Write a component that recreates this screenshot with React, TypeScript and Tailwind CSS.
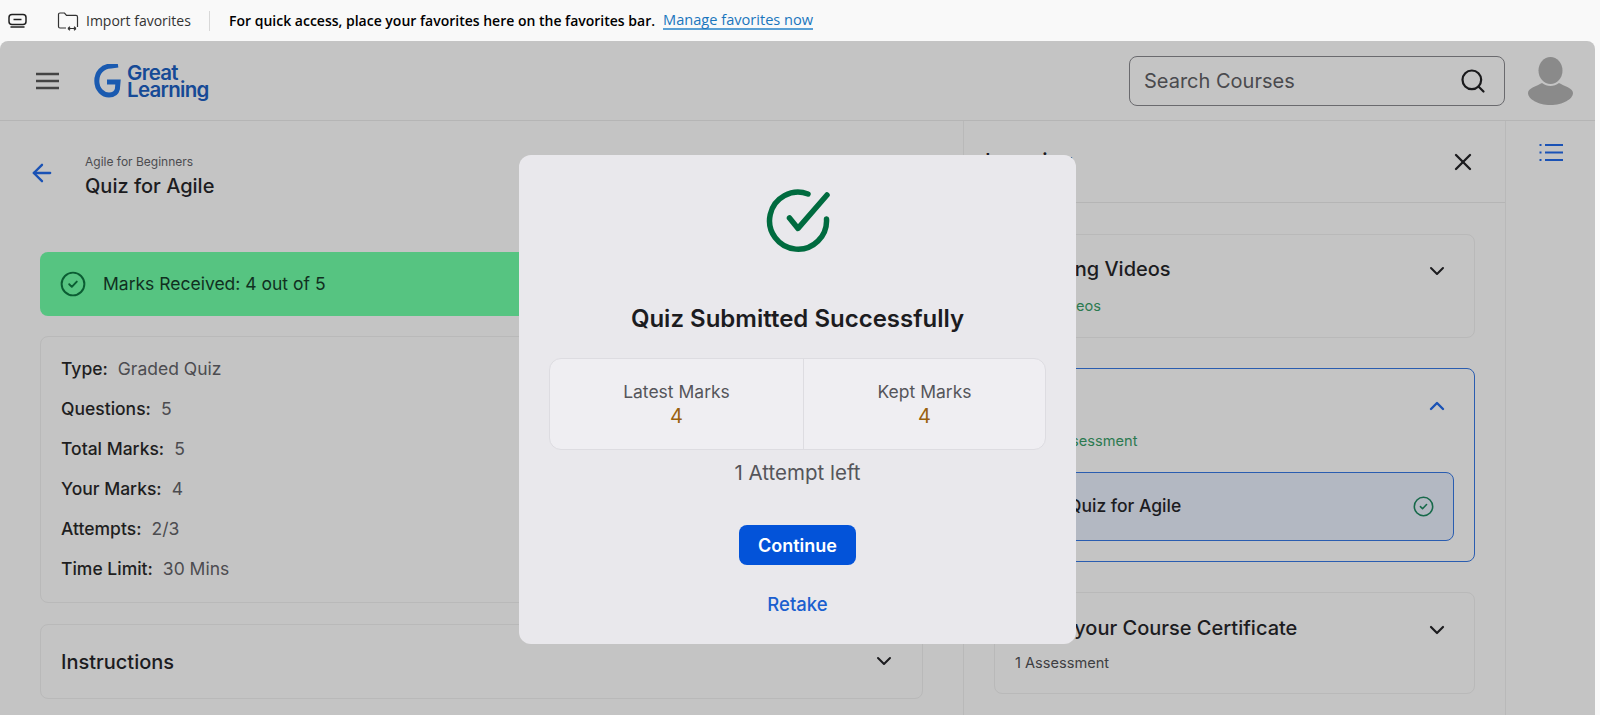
import React from "react";
import { ChevronDown, ChevronUp, Search, X, ArrowLeft } from "lucide-react";

function CheckCircle({ className }: { className?: string }) {
  return (
    <svg viewBox="0 0 24 24" fill="none" stroke="currentColor" className={className}>
      <circle cx="12" cy="12" r="10.5" strokeWidth="1.8" />
      <path d="M8.5 12.2l2.4 2.4 4.6-4.8" strokeWidth="1.8" strokeLinecap="round" strokeLinejoin="round" />
    </svg>
  );
}

function Row({ label, value }: { label: string; value: string }) {
  return (
    <div className="flex h-6 items-center text-[17.5px] leading-6">
      <span className="font-medium text-[#1e1e21]">{label}</span>
      <span className="ml-[10px] text-[#4c4c50]">{value}</span>
    </div>
  );
}

function Logo() {
  return (
    <div className="flex items-center">
      <svg width="27" height="34" viewBox="0 0 27 34" fill="none">
        <path d="M24 1 L17 2 C8 2.4 2.8 9 2.8 17 C2.8 25.5 9 31 15 31 C20 31 22.6 28.5 23.4 25 L24 18 L13 18" stroke="#1a5ab0" strokeWidth="5" strokeLinejoin="miter" />
      </svg>
      <div className="ml-[6px] flex flex-col text-[20.5px] font-semibold leading-[17px] tracking-[-0.7px] text-[#164a96]">
        <span>Great</span>
        <span>Learning</span>
      </div>
    </div>
  );
}

export default function App() {
  return (
    <div className="relative flex h-[715px] w-[1600px] flex-col overflow-hidden bg-[#f9f9f9] font-['Inter',sans-serif]">
      {/* Favorites bar */}
      <div className="flex h-[41px] items-center font-['Open_Sans',sans-serif] text-[14px] text-[#222]">
        <svg className="ml-[8px]" width="20" height="16" viewBox="0 0 20 16" fill="none" stroke="#222" strokeWidth="1.5">
          <rect x="1" y="1.5" width="17" height="10" rx="3" />
          <path d="M5.5 6.5h8" />
          <path d="M3 14h13" strokeLinecap="round" />
        </svg>
        <svg className="ml-[29px]" width="22" height="20" viewBox="0 0 22 20" fill="none" stroke="#333" strokeWidth="1.2">
          <path d="M9 17H3a1.5 1.5 0 0 1-1.5-1.5v-12A1.5 1.5 0 0 1 3 2h4.5l2 2.4H19a1.5 1.5 0 0 1 1.5 1.5V16" />
          <path d="M11 17.5h8M11 17.5l2-1.8M11 17.5l2 1.8M19 17.5l-2-1.8M19 17.5l-2 1.8" />
        </svg>
        <span className="ml-[7px] w-[104px] whitespace-nowrap text-[#333]">Import favorites</span>
        <div className="ml-[19px] h-[20px] w-px bg-[#d8d8d8]" />
        <span className="ml-[19px] whitespace-nowrap text-[14px] font-semibold text-black">For quick access, place your favorites here on the favorites bar.</span>
        <span className="ml-[8px] whitespace-nowrap border-b-2 border-[#5aa0d4] text-[14.6px] font-medium leading-[17px] text-[#1a76bd]">Manage favorites now</span>
      </div>

      {/* App */}
      <div className="mr-[5px] flex flex-1 flex-col rounded-t-lg bg-[#c4c4c4]">
        <header className="flex h-[80px] items-center border-b border-[#b5b5b5] pl-[36px]">
          <svg width="23" height="18" viewBox="0 0 23 18" stroke="#444" strokeWidth="2.4">
            <path d="M0 2h23M0 9h23M0 16h23" />
          </svg>
          <div className="ml-[35px]">
            <Logo />
          </div>
          <div className="ml-auto flex h-[50px] w-[376px] items-center justify-between rounded-lg border border-[#6a6a6e] pl-[14px] pr-[17px]">
            <span className="text-[20px] text-[#4a4a4e]">Search Courses</span>
            <Search size={28} strokeWidth={1.9} className="text-[#1a1a1c]" />
          </div>
          <svg className="ml-[23px] mr-[22px]" width="45" height="48" viewBox="0 0 45 48" fill="#8a8a8a">
            <ellipse cx="22.5" cy="13.5" rx="12" ry="13.5" />
            <path d="M14 26c-5 3-14 5-14 10 0 6 10 12 22.5 12S45 42 45 36c0-5-9-7-14-10-5 4-12 4-17 0z" />
          </svg>
        </header>

        <div className="flex flex-1 overflow-hidden">
          {/* Left */}
          <div className="w-[963px] shrink-0 pl-[40px] pr-[40px] pt-[33px]">
            <div className="relative">
              <ArrowLeft size={28} strokeWidth={2} className="absolute left-[-12px] top-[5px] text-[#1a52b5]" />
              <div className="pl-[45px]">
                <div className="text-xs leading-4 text-[#4c4c50]">Agile for Beginners</div>
                <div className="mt-[2px] text-[20px] font-medium leading-7 text-[#1c1c1f]">Quiz for Agile</div>
              </div>
            </div>
            <div className="mt-[52px] flex h-[64px] items-center rounded-lg bg-[#56c481] pl-[20px]">
              <CheckCircle className="h-[26px] w-[26px] text-[#0b5d33]" />
              <span className="ml-[17px] text-[17.5px] text-[#10301f]">Marks Received: 4 out of 5</span>
            </div>
            <div className="mt-[20px] flex flex-col gap-4 rounded-lg border border-[#b9b9b9] px-[20px] pb-[21px] pt-[20px]">
              <Row label="Type:" value="Graded Quiz" />
              <Row label="Questions:" value="5" />
              <Row label="Total Marks:" value="5" />
              <Row label="Your Marks:" value="4" />
              <Row label="Attempts:" value="2/3" />
              <Row label="Time Limit:" value="30 Mins" />
            </div>
            <div className="mt-[21px] flex h-[75px] items-center justify-between rounded-lg border border-[#b9b9b9] pl-[20px] pr-[26px]">
              <span className="text-[20px] font-medium text-[#1c1c1f]">Instructions</span>
              <ChevronDown size={24} strokeWidth={2} className="mt-[-2px] text-[#1c1c1f]" />
            </div>
          </div>

          {/* Right panel */}
          <div className="w-[542px] shrink-0 border-l border-[#b9b9b9]">
            <div className="flex h-[82px] items-center justify-between border-b border-[#b5b5b5] pl-[21px] pr-[28px]">
              <span className="text-[21px] font-medium text-[#1c1c1f]">Learning</span>
              <X size={28} strokeWidth={2} className="mt-[1px] text-[#1c1c1f]" />
            </div>
            <div className="flex flex-col gap-[30px] px-[30px] pt-[31px]">
              <div className="relative h-[104px] rounded-lg border border-[#b9b9b9] pl-[20px] pt-[20px]">
                <div className="text-[20px] font-medium leading-7 text-[#1c1c1f]">Learning Videos</div>
                <div className="mt-[13px] text-[14.6px] leading-5 text-[#2c7a50]">1 of 1 Videos</div>
                <ChevronDown size={24} strokeWidth={2} className="absolute right-[25px] top-[24px] text-[#1c1c1f]" />
              </div>
              <div className="relative h-[194px] rounded-lg border border-[#2a5db0] pl-[20px] pt-[21px]">
                <div className="text-[20px] font-medium leading-7 text-[#1c1c1f]">Quiz</div>
                <div className="mt-[13px] text-[14.6px] leading-5 text-[#2c7a50]">1 of 1 Assessment</div>
                <ChevronUp size={24} strokeWidth={2.4} className="absolute right-[25px] top-[25px] text-[#1a52b5]" />
                <div className="mr-[20px] mt-[21px] flex h-[69px] items-center justify-between rounded-lg border border-[#2a5db0] bg-[#b3b8c2] pl-[52px] pr-[19px]">
                  <span className="text-[17.5px] font-medium text-[#1c1c1f]">Quiz for Agile</span>
                  <CheckCircle className="h-[21px] w-[21px] text-[#17694a]" />
                </div>
              </div>
              <div className="relative h-[102px] rounded-lg border border-[#b9b9b9] pl-[20px] pt-[21px]">
                <div className="text-[20px] font-medium leading-7 text-[#1c1c1f]">Claim your Course Certificate</div>
                <div className="mt-[11px] text-[14.6px] leading-5 text-[#3e3e42]">1 Assessment</div>
                <ChevronDown size={24} strokeWidth={2.2} className="absolute right-[25px] top-[25px] text-[#1c1c1f]" />
              </div>
            </div>
          </div>

          {/* Rail */}
          <div className="flex flex-1 justify-center border-l border-[#b9b9b9] pt-[22px]">
            <svg width="24" height="19" viewBox="0 0 24 19" fill="none" stroke="#1a52b5" strokeWidth="2.2">
              <path d="M6 2h18M6 9.5h18M6 17h18" />
              <path d="M0.5 2h2M0.5 9.5h2M0.5 17h2" />
            </svg>
          </div>
        </div>
      </div>

      {/* Modal */}
      <div className="absolute left-[519px] top-[155px] flex h-[489px] w-[557px] flex-col items-center rounded-xl bg-[#e9e8ec]">
        <svg className="mt-[34px]" width="64" height="64" viewBox="0 0 64 64" fill="none" stroke="#006b3f" strokeWidth="5.5" strokeLinecap="round" strokeLinejoin="round">
          <path d="M42 5 A28.5 28.5 0 1 0 60.5 30" />
          <path d="M23.5 29 L32 39.4 L61 6" />
        </svg>
        <h2 className="mt-[50px] text-[24px] font-semibold leading-8 text-[#1c1c1f]">Quiz Submitted Successfully</h2>
        <div className="mt-[23px] flex h-[92px] w-[497px] rounded-xl border border-[#dddce1] bg-[#efeef2]">
          <div className="flex flex-1 flex-col items-center justify-center border-r border-[#dddce1]">
            <span className="text-[17.5px] leading-6 text-[#55555a]">Latest Marks</span>
            <span className="text-[20px] leading-6 text-[#99600f]">4</span>
          </div>
          <div className="flex w-[241px] flex-col items-center justify-center">
            <span className="text-[17.5px] leading-6 text-[#55555a]">Kept Marks</span>
            <span className="text-[20px] leading-6 text-[#99600f]">4</span>
          </div>
        </div>
        <div className="mt-[9px] text-[20.5px] leading-7 text-[#55555a]">1 Attempt left</div>
        <button className="mt-[38px] h-[40px] w-[117px] rounded-lg bg-[#0353d9] text-[18px] font-semibold text-white">Continue</button>
        <button className="mt-[27px] text-[18.5px] font-medium leading-6 text-[#1a5fcf]">Retake</button>
      </div>
    </div>
  );
}
